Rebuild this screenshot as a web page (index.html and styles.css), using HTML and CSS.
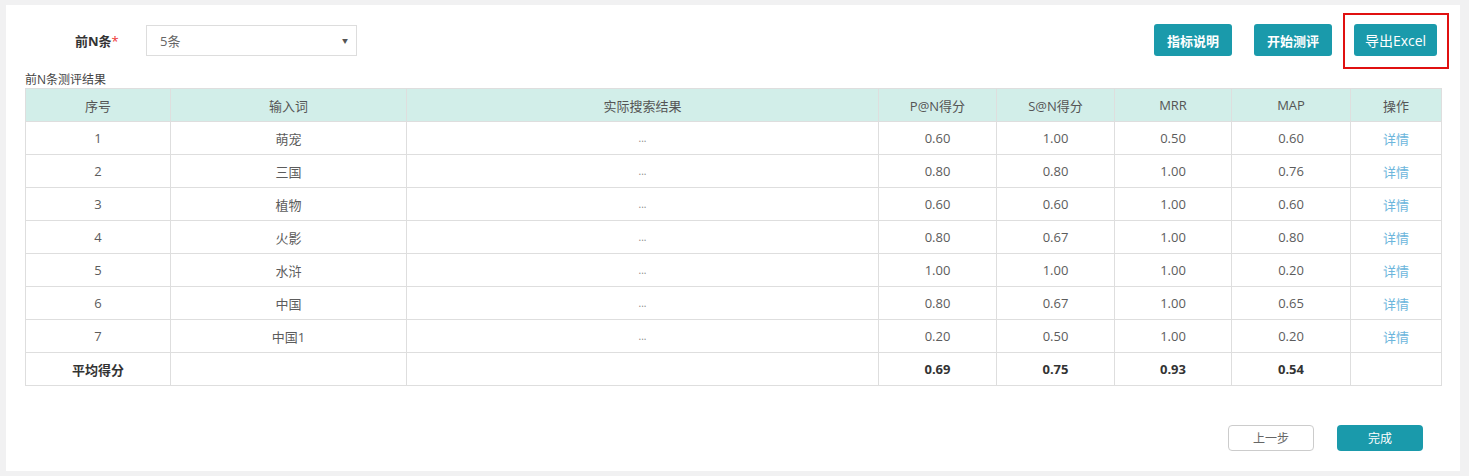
FILE: index.html
```html
<!DOCTYPE html>
<html lang="zh-CN">
<head>
<meta charset="utf-8">
<title>前N条测评结果</title>
<link rel="stylesheet" href="styles.css">
</head>
<body>
<div class="card">
  <div class="toolbar">
    <div class="field">
      <span class="label">前N条<i class="req">*</i></span>
      <div class="select"><span>5条</span><span class="arrow">▼</span></div>
    </div>
    <div class="actions">
      <button class="btn">指标说明</button>
      <button class="btn">开始测评</button>
      <span class="mark-wrap"><button class="btn btn-excel">导出Excel</button><span class="mark"></span></span>
    </div>
  </div>
  <div class="caption">前N条测评结果</div>
  <table class="grid">
    <colgroup>
      <col style="width:145px"><col style="width:236px"><col style="width:472px"><col style="width:118px"><col style="width:118px"><col style="width:117px"><col style="width:119px"><col style="width:91px">
    </colgroup>
    <thead>
      <tr><th>序号</th><th>输入词</th><th>实际搜索结果</th><th>P@N得分</th><th>S@N得分</th><th>MRR</th><th>MAP</th><th>操作</th></tr>
    </thead>
    <tbody>
      <tr><td>1</td><td>萌宠</td><td class="dots">...</td><td>0.60</td><td>1.00</td><td>0.50</td><td>0.60</td><td><a class="link">详情</a></td></tr>
      <tr><td>2</td><td>三国</td><td class="dots">...</td><td>0.80</td><td>0.80</td><td>1.00</td><td>0.76</td><td><a class="link">详情</a></td></tr>
      <tr><td>3</td><td>植物</td><td class="dots">...</td><td>0.60</td><td>0.60</td><td>1.00</td><td>0.60</td><td><a class="link">详情</a></td></tr>
      <tr><td>4</td><td>火影</td><td class="dots">...</td><td>0.80</td><td>0.67</td><td>1.00</td><td>0.80</td><td><a class="link">详情</a></td></tr>
      <tr><td>5</td><td>水浒</td><td class="dots">...</td><td>1.00</td><td>1.00</td><td>1.00</td><td>0.20</td><td><a class="link">详情</a></td></tr>
      <tr><td>6</td><td>中国</td><td class="dots">...</td><td>0.80</td><td>0.67</td><td>1.00</td><td>0.65</td><td><a class="link">详情</a></td></tr>
      <tr><td>7</td><td>中国1</td><td class="dots">...</td><td>0.20</td><td>0.50</td><td>1.00</td><td>0.20</td><td><a class="link">详情</a></td></tr>
      <tr class="avg"><td>平均得分</td><td></td><td></td><td>0.69</td><td>0.75</td><td>0.93</td><td>0.54</td><td></td></tr>
    </tbody>
  </table>
  <div class="footer">
    <button class="btn btn-ghost">上一步</button>
    <button class="btn btn-done">完成</button>
  </div>
</div>
</body>
</html>
```
FILE: styles.css
```css
html, body {
  margin: 0;
  padding: 0;
  background: #f1f1f2;
}
body {
  font-family: "Open Sans", "Noto Sans CJK SC", sans-serif;
  font-size: 13px;
  color: #555;
  padding: 5px 0 0 6px;
}
.card {
  width: 1454px;
  height: 466px;
  box-sizing: border-box;
  background: #fff;
  padding: 19px 19px 20px 19px;
  display: flex;
  flex-direction: column;
}
.toolbar {
  display: flex;
  justify-content: space-between;
  align-items: center;
  height: 32px;
}
.field {
  display: flex;
  align-items: center;
  padding-left: 50px;
}
.label {
  font-weight: 700;
  color: #333;
  font-size: 13px;
  width: 71px;
}
.req {
  font-style: normal;
  color: #e33;
  font-weight: 400;
}
.select {
  width: 211px;
  height: 31px;
  box-sizing: border-box;
  border: 1px solid #ddd;
  display: flex;
  align-items: center;
  justify-content: space-between;
  padding: 0 6px 0 13px;
  color: #666;
  font-size: 13px;
  margin-top: 1px;
}
.arrow {
  font-size: 6px;
  color: #555;
  margin-right: 2px;
}
.actions {
  display: flex;
  align-items: center;
  gap: 22px;
  padding-right: 4px;
}
.btn {
  font-family: "Open Sans", "Noto Sans CJK SC", sans-serif;
  height: 32px;
  width: 78px;
  border: 0;
  border-radius: 3px;
  background: #1a9aab;
  color: #fff;
  font-size: 13px;
  font-weight: 600;
  padding: 0;
  cursor: pointer;
}
.btn-excel {
  width: 83px;
  font-weight: 400;
  font-size: 14px;
}
.mark-wrap {
  position: relative;
  display: inline-flex;
}
.mark {
  position: absolute;
  left: -11px;
  top: -11px;
  right: -12px;
  bottom: -13px;
  border: 2px solid #e01010;
}
.caption {
  margin-top: 16px;
  font-size: 12px;
  line-height: 16px;
  color: #444;
}
.grid {
  border-collapse: collapse;
  table-layout: fixed;
  width: 1416px;
}
.grid th, .grid td {
  border: 1px solid #dedede;
  height: 32px;
  padding: 0;
  text-align: center;
  font-weight: 400;
  font-size: 13px;
  color: #5c5c5c;
}
.grid th {
  background: #d2eee9;
  color: #555;
}
.grid td.dots {
  font-size: 10px;
  color: #888;
}
.grid tr.avg td {
  font-weight: 700;
  color: #333;
}
.link {
  color: #6cb6dc;
  text-decoration: none;
}
.footer {
  margin-top: auto;
  display: flex;
  justify-content: flex-end;
  gap: 23px;
  padding-right: 18px;
}
.footer .btn {
  height: 26px;
  width: 86px;
  font-size: 12px;
  font-weight: 400;
  border-radius: 4px;
}
.btn-ghost {
  background: #fff;
  border: 1px solid #ccc;
  color: #666;
}
.btn-done {
  width: 85px;
}
```
